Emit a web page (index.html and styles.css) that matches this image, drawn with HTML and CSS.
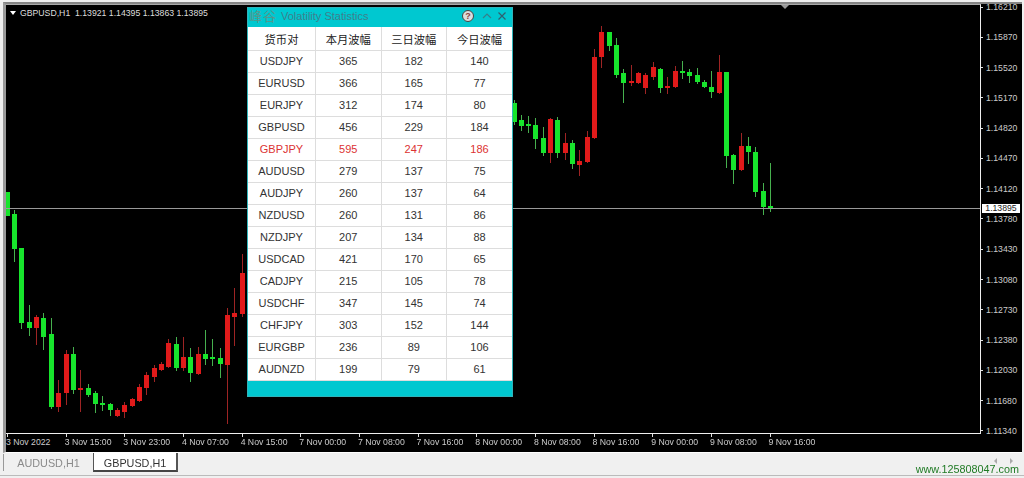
FILE: index.html
```html
<!DOCTYPE html>
<html lang="zh">
<head>
  <meta charset="UTF-8" />
  <title>GBPUSD,H1</title>
  <link rel="stylesheet" href="styles.css">
</head>
<body>
  <div class="terminal">
    <div class="chart-window">
      <div class="chart-main">
        <div class="plot">
          <svg id="candles" class="candles" viewBox="6 5 974 428"></svg>
          <div class="hline"></div>
          <div class="shift-mark"></div>
          <div class="chart-title"><span class="title-arrow"></span>GBPUSD,H1&nbsp; 1.13921 1.14395 1.13863 1.13895</div>
        </div>
        <div class="price-axis">
          <span>1.16210</span>
          <span>1.15870</span>
          <span>1.15520</span>
          <span>1.15170</span>
          <span>1.14820</span>
          <span>1.14470</span>
          <span>1.14120</span>
          <span>1.13780</span>
          <span>1.13430</span>
          <span>1.13080</span>
          <span>1.12730</span>
          <span>1.12380</span>
          <span>1.12030</span>
          <span>1.11680</span>
          <span>1.11340</span>
          <div class="price-now">1.13895</div>
        </div>
      </div>
      <div class="time-axis">
        <span>3 Nov 2022</span>
        <span>3 Nov 15:00</span>
        <span>3 Nov 23:00</span>
        <span>4 Nov 07:00</span>
        <span>4 Nov 15:00</span>
        <span>7 Nov 00:00</span>
        <span>7 Nov 08:00</span>
        <span>7 Nov 16:00</span>
        <span>8 Nov 00:00</span>
        <span>8 Nov 08:00</span>
        <span>8 Nov 16:00</span>
        <span>9 Nov 00:00</span>
        <span>9 Nov 08:00</span>
        <span>9 Nov 16:00</span>
      </div>
    </div>

    <div class="tabbar">
      <div class="tab">AUDUSD,H1</div>
      <div class="tab active">GBPUSD,H1</div>
      <div class="watermark">www.125808047.com</div>
      <div class="scroll-arrows"><span class="arrow-left"></span><span class="arrow-right"></span></div>
    </div>

    <div class="panel">
      <div class="panel-head">
        <span class="panel-logo">峰谷</span>
        <span class="panel-title">Volatility Statistics</span>
        <span class="help">?</span>
        <svg class="head-icon" width="10" height="8" viewBox="0 0 10 8"><path d="M1 6 L5 2 L9 6" /></svg>
        <svg class="head-icon close" width="10" height="8" viewBox="0 0 10 8"><path d="M1.5 0.5 L8.5 7.5 M8.5 0.5 L1.5 7.5" /></svg>
      </div>
      <table class="stats">
        <thead>
          <tr><th class="pair-col">货币对</th><th>本月波幅</th><th>三日波幅</th><th>今日波幅</th></tr>
        </thead>
        <tbody>
          <tr><td>USDJPY</td><td>365</td><td>182</td><td>140</td></tr>
          <tr><td>EURUSD</td><td>366</td><td>165</td><td>77</td></tr>
          <tr><td>EURJPY</td><td>312</td><td>174</td><td>80</td></tr>
          <tr><td>GBPUSD</td><td>456</td><td>229</td><td>184</td></tr>
          <tr class="top"><td>GBPJPY</td><td>595</td><td>247</td><td>186</td></tr>
          <tr><td>AUDUSD</td><td>279</td><td>137</td><td>75</td></tr>
          <tr><td>AUDJPY</td><td>260</td><td>137</td><td>64</td></tr>
          <tr><td>NZDUSD</td><td>260</td><td>131</td><td>86</td></tr>
          <tr><td>NZDJPY</td><td>207</td><td>134</td><td>88</td></tr>
          <tr><td>USDCAD</td><td>421</td><td>170</td><td>65</td></tr>
          <tr><td>CADJPY</td><td>215</td><td>105</td><td>78</td></tr>
          <tr><td>USDCHF</td><td>347</td><td>145</td><td>74</td></tr>
          <tr><td>CHFJPY</td><td>303</td><td>152</td><td>144</td></tr>
          <tr><td>EURGBP</td><td>236</td><td>89</td><td>106</td></tr>
          <tr><td>AUDNZD</td><td>199</td><td>79</td><td>61</td></tr>
        </tbody>
      </table>
    </div>
  </div>

  <script src="chart.js"></script>
</body>
</html>
```

FILE: styles.css
```css
body {
  margin: 0;
  background: #f0f0f0;
  font-family: "Liberation Sans", Arial, sans-serif;
  overflow: hidden;
}

.terminal {
  position: relative;
  width: 1024px;
  height: 478px;
  display: flex;
  flex-direction: column;
  filter: blur(0.3px);
}

/* chart */
.chart-window {
  margin: 2px 2px 0 3px;
  height: 451px;
  box-sizing: border-box;
  background: #000;
  border-top: 2px solid #858585;
  border-left: 3px solid #9a9a9a;
  border-bottom: 1px solid #fff;
  color: #ccc;
  font-size: 8.7px;
}

.chart-main {
  display: flex;
}

.plot {
  position: relative;
  width: 974px;
  height: 428px;
  border-top: 1px solid #aaa;
  border-right: 1px solid #eee;
  border-bottom: 1px solid #eee;
}

.candles {
  display: block;
  width: 974px;
  height: 428px;
}

.hline {
  position: absolute;
  left: 0;
  right: 0;
  top: 203px;
  height: 1px;
  background: #999;
}

.shift-mark {
  position: absolute;
  left: 775px;
  top: 0;
  border-left: 4px solid transparent;
  border-right: 4px solid transparent;
  border-top: 4px solid #999;
}

.chart-title {
  position: absolute;
  left: 14px;
  top: 3px;
  display: flex;
  align-items: center;
  white-space: pre;
  line-height: 11px;
  color: #ddd;
}

.title-arrow {
  position: absolute;
  left: -10px;
  top: 3px;
  border-left: 3px solid transparent;
  border-right: 3px solid transparent;
  border-top: 4px solid #fff;
}

.price-axis {
  position: relative;
  flex: 1;
  display: flex;
  flex-direction: column;
  justify-content: space-between;
  line-height: 6px;
}

.price-axis span {
  display: flex;
  align-items: center;
  gap: 3px;
}

.price-axis span::before {
  content: "";
  width: 2px;
  height: 1px;
  background: #ddd;
}

.price-now {
  position: absolute;
  left: 1px;
  top: 200px;
  width: 38px;
  height: 9px;
  line-height: 9px;
  background: #fff;
  color: #222;
  text-align: center;
}

.time-axis {
  display: grid;
  grid-template-columns: repeat(14, 58.67px);
  height: 18px;
  line-height: 16px;
}

.time-axis span {
  position: relative;
  white-space: nowrap;
}

.time-axis span::before {
  content: "";
  position: absolute;
  left: 1px;
  top: 0;
  width: 1px;
  height: 3px;
  background: #ddd;
}

/* tabs */
.tabbar {
  position: relative;
  height: 22px;
  display: flex;
  align-items: flex-start;
  padding-left: 3px;
  border-bottom: 1px solid #bbb;
  font-size: 10.8px;
}

.tab {
  width: 89px;
  height: 17px;
  margin-top: 1px;
  line-height: 19px;
  text-align: center;
  color: #8a8a8a;
  border-left: 1px solid #999;
}

.tab.active {
  width: 82px;
  height: 17px;
  margin-top: 0;
  line-height: 20px;
  background: #fff;
  color: #333;
  border-left: 1px solid #555;
  border-right: 2px solid #555;
  border-bottom: 2px solid #444;
}

.watermark {
  margin-left: auto;
  margin-right: 5px;
  margin-top: 9px;
  line-height: 14px;
  color: #1f7a24;
}

.scroll-arrows {
  position: absolute;
  left: 994px;
  top: 5px;
  display: flex;
  gap: 13px;
}

.arrow-left {
  border-top: 3px solid transparent;
  border-bottom: 3px solid transparent;
  border-right: 3px solid #aaa;
}

.arrow-right {
  border-top: 3px solid transparent;
  border-bottom: 3px solid transparent;
  border-left: 3px solid #aaa;
}

/* floating statistics window */
.panel {
  position: absolute;
  left: 247px;
  top: 7px;
  width: 266px;
  height: 390px;
  box-sizing: border-box;
  background: #00c8d0;
  border: 1px solid #2fb4ba;
}

.panel-head {
  height: 19px;
  box-sizing: border-box;
  display: flex;
  align-items: center;
  padding: 0 5px 4px 1px;
}

.panel-logo {
  font-family: "Noto Sans CJK SC", sans-serif;
  font-size: 13px;
  letter-spacing: 1px;
  color: #5a9488;
  width: 32px;
}

.panel-title {
  font-size: 11px;
  color: #3f7f8c;
  flex: 1;
}

.help {
  width: 10px;
  height: 10px;
  margin-right: 8px;
  border: 1px solid #444;
  border-radius: 50%;
  background: #ddd;
  color: #8a4040;
  font-size: 9px;
  font-weight: bold;
  line-height: 10px;
  text-align: center;
}

.head-icon {
  fill: none;
  stroke: #35808a;
  stroke-width: 1.2;
  margin-right: 5px;
}

.head-icon.close {
  stroke: #2f6070;
  margin-right: 0;
}

.stats {
  width: 264px;
  table-layout: fixed;
  border-collapse: collapse;
  background: #fff;
  color: #333;
  font-size: 11px;
  text-align: center;
}

.stats th {
  height: 23px;
  padding: 0;
  font-family: "Noto Sans CJK SC", sans-serif;
  font-size: 11.3px;
  font-weight: normal;
  color: #222;
  border-bottom: 1px solid #ddd;
  border-right: 1px solid #ddd;
}

.stats .pair-col {
  width: 67px;
}

.stats td {
  height: 22px;
  padding: 0 0 2px;
  box-sizing: border-box;
  border-bottom: 1px solid #ddd;
  border-right: 1px solid #ddd;
}

.stats th:last-child,
.stats td:last-child {
  border-right: none;
}

.stats .top td {
  color: #dc3232;
}
```

FILE: chart.js
```js
// x, high, body top, body bottom, low, colour (page pixels)
const candles = [
  [7, 192, 192, 216, 216, "g"], [14, 210, 214, 249, 262, "g"], [21, 248, 248, 323, 329, "g"],
  [29, 305, 322, 328, 336, "g"], [36, 315, 317, 328, 345, "r"], [43, 313, 318, 337, 350, "g"],
  [51, 318, 334, 407, 409, "g"], [58, 380, 393, 407, 412, "r"], [66, 350, 354, 393, 405, "r"],
  [73, 347, 354, 390, 394, "g"], [80, 370, 388, 390, 412, "r"], [88, 384, 388, 395, 397, "g"],
  [95, 391, 393, 404, 413, "g"], [102, 396, 403, 405, 411, "g"], [110, 403, 404, 410, 416, "g"],
  [117, 408, 410, 416, 417, "r"], [124, 402, 405, 412, 418, "r"], [132, 398, 399, 406, 407, "r"],
  [139, 384, 387, 401, 402, "r"], [146, 372, 375, 388, 395, "r"], [154, 365, 368, 377, 382, "r"],
  [161, 362, 364, 370, 371, "r"], [168, 339, 343, 367, 368, "r"], [176, 337, 344, 368, 371, "g"],
  [183, 337, 357, 368, 371, "r"], [190, 348, 357, 373, 382, "g"], [198, 347, 354, 374, 375, "r"],
  [205, 330, 354, 359, 365, "g"], [212, 339, 357, 359, 366, "g"], [220, 348, 358, 364, 378, "g"],
  [227, 308, 315, 365, 424, "r"], [234, 288, 313, 317, 346, "r"], [242, 254, 273, 314, 317, "r"],

  [514, 100, 103, 122, 125, "g"], [521, 115, 120, 126, 131, "g"], [528, 116, 124, 126, 133, "g"],
  [535, 118, 125, 139, 149, "g"], [543, 127, 138, 153, 156, "g"], [550, 118, 119, 153, 163, "r"],
  [557, 117, 120, 153, 158, "g"], [565, 133, 143, 153, 160, "r"], [572, 140, 143, 164, 169, "g"],
  [579, 150, 161, 165, 176, "r"], [587, 131, 137, 162, 163, "r"], [594, 49, 57, 138, 139, "r"],
  [601, 26, 32, 57, 68, "r"], [609, 32, 32, 46, 51, "g"], [616, 38, 45, 75, 78, "g"],
  [623, 69, 73, 83, 103, "g"], [631, 65, 81, 83, 86, "r"], [638, 72, 73, 83, 84, "r"],
  [645, 73, 75, 88, 94, "r"], [653, 62, 67, 77, 80, "r"], [660, 68, 69, 88, 93, "g"],
  [667, 77, 86, 88, 94, "r"], [675, 66, 71, 87, 88, "r"], [682, 61, 71, 73, 79, "g"],
  [689, 69, 72, 76, 83, "g"], [697, 68, 75, 82, 84, "g"], [704, 80, 82, 87, 88, "g"],
  [711, 71, 87, 92, 98, "g"], [719, 55, 72, 93, 94, "r"], [726, 72, 72, 156, 168, "g"],
  [733, 154, 155, 170, 184, "g"], [741, 133, 146, 170, 171, "r"], [748, 137, 146, 152, 164, "g"],
  [755, 147, 152, 192, 197, "g"], [763, 183, 191, 207, 215, "g"], [770, 163, 206, 209, 212, "g"]
];

const colours = {
  g: { body: "#17e52c", wick: "#46b04e" },
  r: { body: "#e01a1a", wick: "#9e2424" }
};

const svg = document.getElementById("candles");
let markup = "";

candles.forEach(([x, high, top, bottom, low, c]) => {
  const col = colours[c];
  markup += `<rect x="${x}" y="${high}" width="1" height="${low - high}" fill="${col.wick}"/>`;
  markup += `<rect x="${x - 2}" y="${top}" width="5" height="${bottom - top}" fill="${col.body}"/>`;
});

svg.innerHTML = markup;
```
